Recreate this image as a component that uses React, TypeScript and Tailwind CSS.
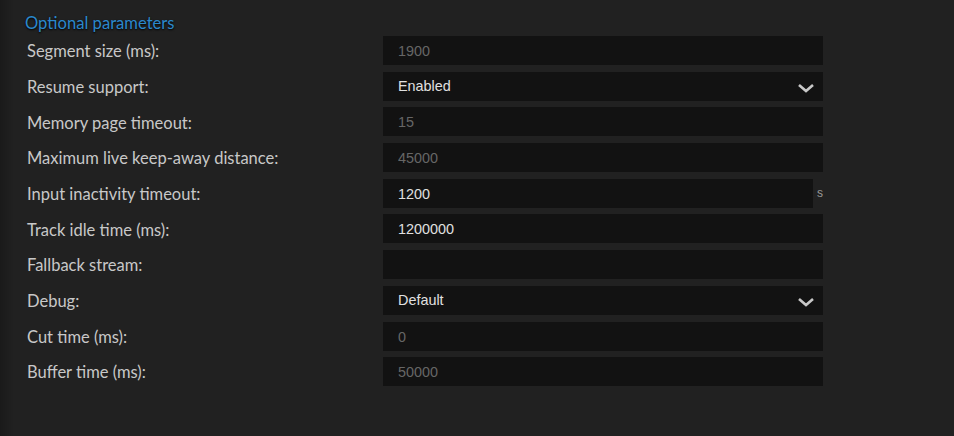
import React from "react";

type Row = {
  label: string;
  kind: "input" | "select";
  value?: string;
  placeholder?: string;
  unit?: string;
};

const rows: Row[] = [
  { label: "Segment size (ms):", kind: "input", placeholder: "1900" },
  { label: "Resume support:", kind: "select", value: "Enabled" },
  { label: "Memory page timeout:", kind: "input", placeholder: "15" },
  { label: "Maximum live keep-away distance:", kind: "input", placeholder: "45000" },
  { label: "Input inactivity timeout:", kind: "input", value: "1200", unit: "s" },
  { label: "Track idle time (ms):", kind: "input", value: "1200000" },
  { label: "Fallback stream:", kind: "input" },
  { label: "Debug:", kind: "select", value: "Default" },
  { label: "Cut time (ms):", kind: "input", placeholder: "0" },
  { label: "Buffer time (ms):", kind: "input", placeholder: "50000" },
];

function Chevron() {
  return (
    <svg width="18" height="10" viewBox="0 0 18 10" className="text-[#c8c8c8] mt-[3px]">
      <path d="M2 2 L9 8 L16 2" fill="none" stroke="currentColor" strokeWidth="2.6" />
    </svg>
  );
}

export default function App() {
  return (
    <div className="w-[954px] h-[436px] overflow-hidden bg-[linear-gradient(to_right,#1a1a1a,#212121_14px,#212121)] font-['Lato',sans-serif]">
      <div className="pl-[25px] pt-[13px]">
        <h3 className="text-[16.6px] leading-[21px] text-[#2b88cc] [text-shadow:0_1px_2px_#000]">
          Optional parameters
        </h3>
        <div className="mt-[2px] flex flex-col gap-[6.7px]">
          {rows.map((row, i) => (
            <div key={i} className="flex items-center h-[29px]">
              <label className="w-[358px] pl-[2px] mt-[2px] text-[16.5px] text-[#c8c8c8]">
                {row.label}
              </label>
              <div className="w-[440px] flex items-center">
                {row.kind === "select" ? (
                  <div className="w-full h-[29px] bg-[#121212] flex items-center justify-between pl-[15px] pr-[8px] font-['Liberation_Sans',sans-serif] text-[14.4px] text-[#e0e0e0]">
                    <span className="mt-[1px]">{row.value}</span>
                    <Chevron />
                  </div>
                ) : (
                  <>
                    <input
                      readOnly
                      value={row.value ?? ""}
                      placeholder={row.placeholder}
                      className={`${row.unit ? "w-[430px]" : "w-full"} h-[29px] pt-[1px] bg-[#121212] pl-[15px] outline-none font-['Liberation_Sans',sans-serif] text-[14.4px] text-[#e0e0e0] placeholder:text-[#666666]`}
                    />
                    {row.unit && (
                      <span className="ml-[4px] font-['Liberation_Sans',sans-serif] text-[12px] text-[#9a9a9a]">
                        {row.unit}
                      </span>
                    )}
                  </>
                )}
              </div>
            </div>
          ))}
        </div>
      </div>
    </div>
  );
}
